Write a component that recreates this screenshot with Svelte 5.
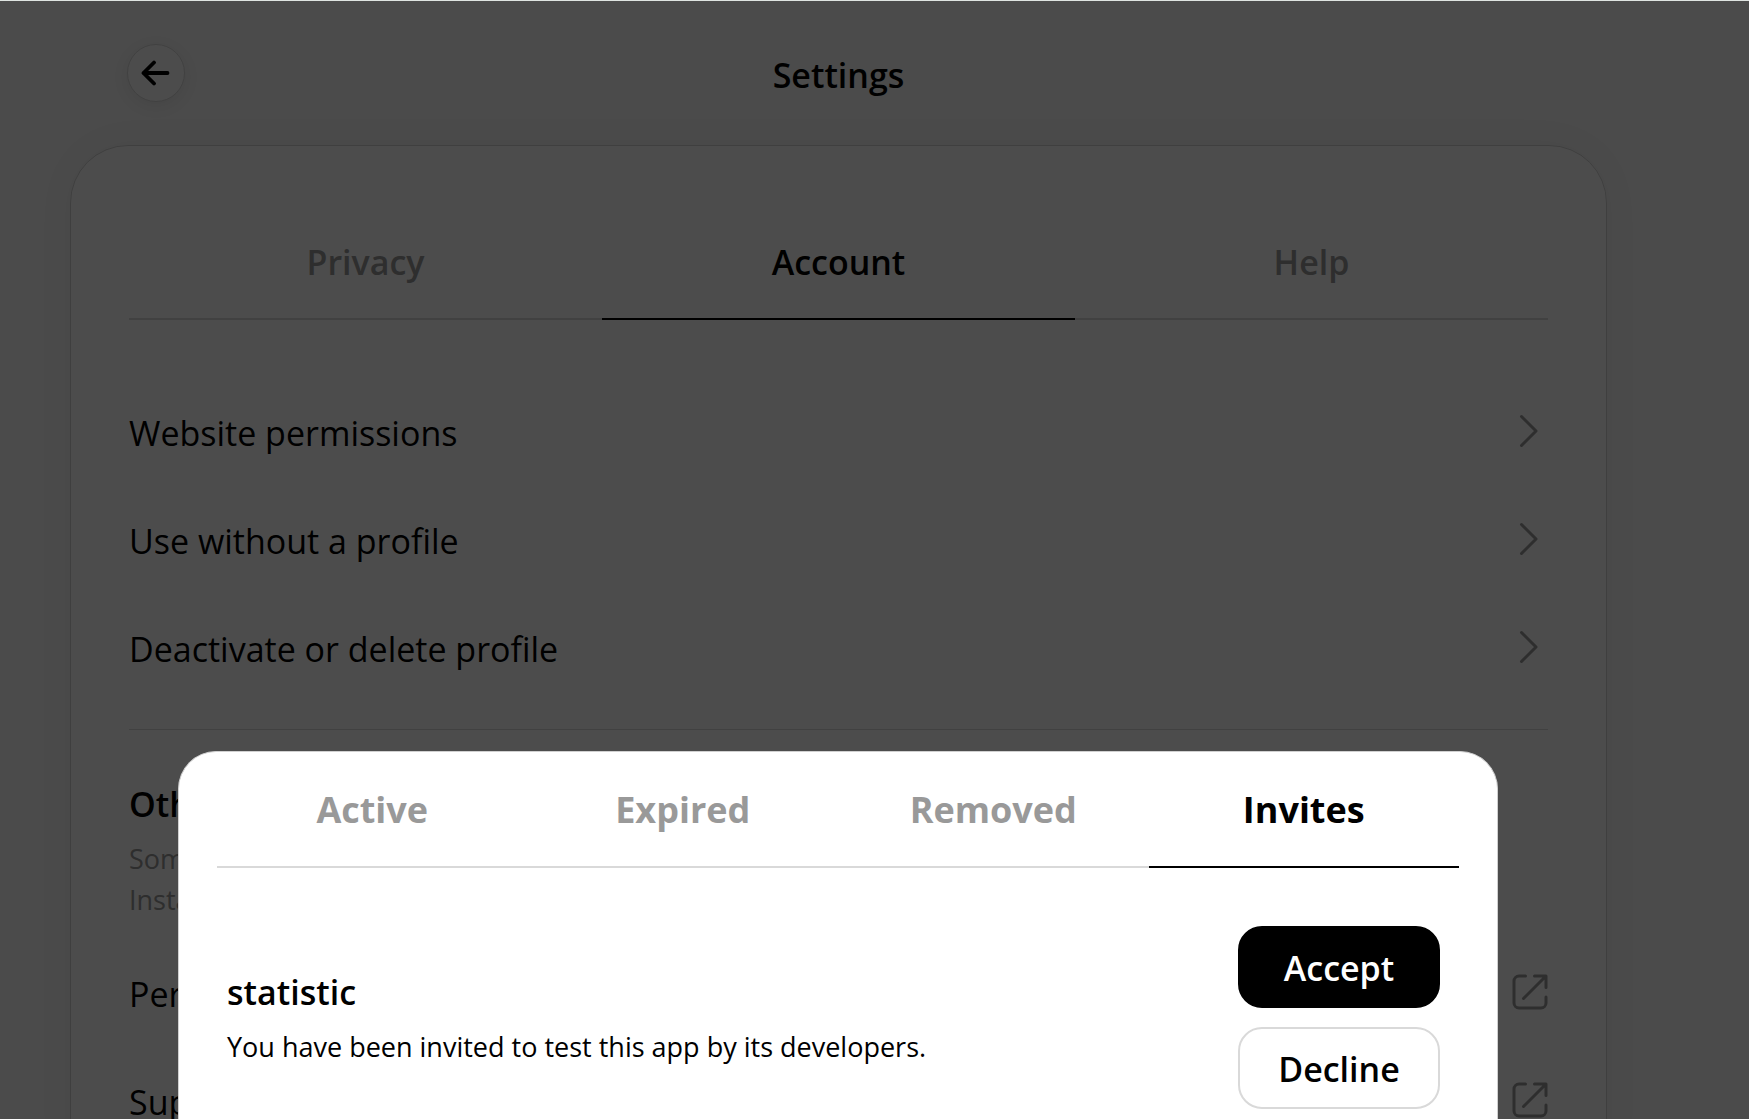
<script>
  const sections = ['Privacy', 'Account', 'Help'];
  const rows = ['Website permissions', 'Use without a profile', 'Deactivate or delete profile'];
  const linked = ['Personal details', 'Supervision'];
  const states = ['Active', 'Expired', 'Removed', 'Invites'];
  let section = $state('Account');
  let current = $state('Invites');
</script>

<div class="screen">
  <div class="page">
    <header class="header">
      <button class="back" aria-label="Back">
        <svg width="30" height="26" viewBox="0 0 30 26" aria-hidden="true">
          <path d="M26.500 13H2.500M13 2.500L2.500 13l10.500 10.500" fill="none" stroke="#000" stroke-width="3.8" stroke-linecap="round" stroke-linejoin="round" />
        </svg>
      </button>
      <h1 class="title">Settings</h1>
    </header>

    <main class="card">
      <nav class="tabs">
        {#each sections as name}
          <button class="tab" class:selected={section === name} onclick={() => (section = name)}>{name}</button>
        {/each}
      </nav>

      <div class="list">
        {#each rows as label}
          <button class="row">
            <span class="label">{label}</span>
            <svg class="chevron" width="20" height="34" viewBox="0 0 20 34" aria-hidden="true">
              <path d="M2.500 2.500L17 17 2.500 31.500" fill="none" stroke="#999" stroke-width="3" stroke-linecap="round" stroke-linejoin="round" />
            </svg>
          </button>
        {/each}
      </div>

      <section class="other">
        <h2 class="heading">Other account settings</h2>
        <p class="note">
          Some settings, like username and supervision, apply to both Threads and<br />
          Instagram and can be managed on Instagram.
        </p>
        {#each linked as label}
          <a class="row" href="#{label}">
            <span class="label">{label}</span>
            <svg width="36" height="36" viewBox="0 0 36 36" aria-hidden="true">
              <g fill="none" stroke="#999" stroke-width="3" stroke-linecap="round" stroke-linejoin="round">
                <path d="M13.500 2H7a5 5 0 0 0-5 5V29a5 5 0 0 0 5 5h22a5 5 0 0 0 5-5v-6" />
                <path d="M22.500 2H34V13.500M33.500 2.500L11.500 24.500" />
              </g>
            </svg>
          </a>
        {/each}
      </section>
    </main>
  </div>

  <div class="scrim">
    <div class="sheet" role="dialog" aria-label="Website permissions">
      <nav class="tabs sheet-tabs">
        {#each states as name}
          <button class="tab" class:selected={current === name} onclick={() => (current = name)}>{name}</button>
        {/each}
      </nav>
      <div class="invite">
        <div class="about">
          <h2 class="heading">statistic</h2>
          <p class="message">You have been invited to test this app by its developers.</p>
        </div>
        <div class="actions">
          <button class="action accept">Accept</button>
          <button class="action">Decline</button>
        </div>
      </div>
    </div>
  </div>
</div>

<style>
  :global(body) {
    margin: 0;
    background: #fafafa;
  }
  .screen {
    position: relative;
    box-sizing: border-box;
    height: 100vh;
    overflow: hidden;
    border-top: 1px solid #dfe4e1;
    background: #fafafa;
    color: #000;
    font-family: 'Segoe UI', 'Open Sans', 'Noto Sans', sans-serif;
    font-size: 34px;
    line-height: 48px;
  }
  .page {
    padding: 0 142px 0 70px;
  }
  button {
    border: 0;
    padding: 0;
    background: none;
    color: inherit;
    font: inherit;
    cursor: pointer;
  }
  h1,
  h2,
  p {
    margin: 0;
  }
  .header {
    display: grid;
    grid-template-columns: 58px 1fr 58px;
    align-items: center;
    height: 144px;
    padding: 0 57px;
  }
  .back {
    display: flex;
    align-items: center;
    justify-content: center;
    box-sizing: border-box;
    width: 58px;
    height: 58px;
    border: 1px solid #dadada;
    border-radius: 50%;
    background: #fff;
    box-shadow: 0 4px 16px rgba(0, 0, 0, 0.08);
  }
  .title {
    padding-top: 4px;
    text-align: center;
    font-size: 34px;
    font-weight: 600;
  }
  .card {
    border: 1px solid #d4d4d4;
    border-radius: 58px 58px 0 0;
    padding: 58px 58px 0;
    background: #fff;
    box-shadow: 0 0 40px rgba(0, 0, 0, 0.04);
  }
  .tabs {
    display: flex;
    height: 116px;
    font-weight: 600;
  }
  .tab {
    flex: 1 1 0;
    padding-top: 2px;
    border-bottom: 2px solid #d9d9d9;
    color: #999;
  }
  .tab.selected {
    border-bottom-color: #000;
    color: #000;
  }
  .list {
    margin-top: 57px;
    padding-bottom: 28px;
    border-bottom: 1px solid #d9d9d9;
  }
  .row {
    display: flex;
    align-items: center;
    justify-content: space-between;
    width: 100%;
    height: 108px;
    color: #000;
    text-align: left;
    text-decoration: none;
  }
  .label {
    padding-top: 4px;
  }
  .chevron {
    margin-right: 9px;
  }
  .other {
    padding-top: 50px;
  }
  .heading {
    font-size: 34px;
    font-weight: 600;
  }
  .note {
    margin: 10px 0 18px;
    color: #999;
    font-size: 27px;
    line-height: 41px;
  }
  .scrim {
    position: absolute;
    inset: 0;
    display: flex;
    align-items: flex-end;
    padding: 0 251px 0 178px;
    background: rgba(0, 0, 0, 0.7);
  }
  .sheet {
    flex: 1;
    border: 1px solid #d0d0d0;
    border-bottom: 0;
    border-radius: 38px 38px 0 0;
    padding: 0 38px 10px;
    background: #fff;
  }
  .sheet-tabs {
    font-size: 36px;
    font-weight: 700;
  }
  .invite {
    display: flex;
    align-items: center;
    justify-content: space-between;
    padding: 58px 19px 0 10px;
  }
  .message {
    margin-top: 11px;
    font-size: 27px;
    line-height: 40px;
  }
  .actions {
    display: flex;
    flex-direction: column;
    gap: 19px;
  }
  .action {
    box-sizing: border-box;
    width: 202px;
    height: 82px;
    padding-top: 2px;
    border: 2px solid #d9d9d9;
    border-radius: 24px;
    font-weight: 600;
  }
  .accept {
    border-color: #000;
    background: #000;
    color: #fff;
  }
</style>
